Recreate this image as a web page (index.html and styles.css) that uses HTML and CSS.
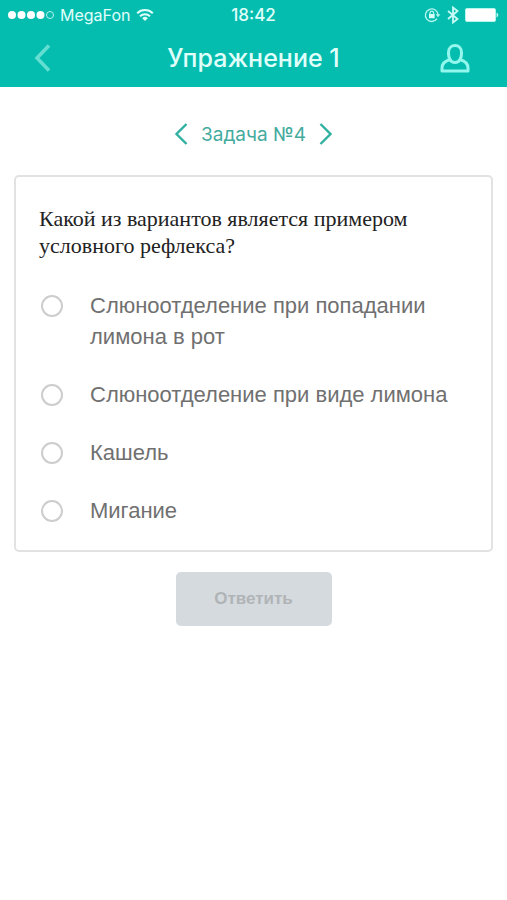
FILE: index.html
```html
<!DOCTYPE html>
<html lang="ru">
<head>
    <meta charset="UTF-8">
    <meta name="viewport" content="width=device-width, initial-scale=1.0">
    <title>Упражнение 1</title>
    <link rel="stylesheet" href="styles.css">
</head>
<body>
    <header class="header">
        <div class="status-bar">
            <div class="status-left">
                <svg class="signal" width="46" height="10" viewBox="0 0 46 10" fill="#fff">
                    <circle cx="4" cy="5" r="4"/>
                    <circle cx="13.5" cy="5" r="4"/>
                    <circle cx="23" cy="5" r="4"/>
                    <circle cx="32.5" cy="5" r="4"/>
                    <circle cx="42" cy="5" r="3.5" fill="none" stroke="#b5f5ee"/>
                </svg>
                <span>MegaFon</span>
                <svg class="wifi" width="18" height="14" viewBox="0 0 18 14" fill="none" stroke="#e0fffb" stroke-width="2">
                    <path d="M1.2 5.2a11.2 11.2 0 0 1 15.6 0"/>
                    <path d="M4 8.2a7.2 7.2 0 0 1 10 0"/>
                    <path d="M9 13L6.2 10.2a4 4 0 0 1 5.6 0z" fill="#e0fffb" stroke="none"/>
                </svg>
            </div>
            <span class="clock">18:42</span>
            <div class="status-right">
                <svg width="17" height="16" viewBox="0 0 17 16" fill="none" stroke="#b5f5ee" stroke-width="1.3">
                    <path d="M13 11.6A6.3 6.3 0 1 1 14 8"/>
                    <path d="M11.6 7.2h4.8L14 10.2z" fill="#b5f5ee" stroke="none"/>
                    <rect x="5" y="7" width="5.6" height="4.2" fill="#d8fffa" stroke="none"/>
                    <path d="M6 7.4V6a1.8 1.8 0 0 1 3.6 0v1.4"/>
                </svg>
                <svg class="bluetooth" width="12" height="18" viewBox="0 0 12 18" fill="none" stroke="#c8fbf5" stroke-width="1.8">
                    <path d="M1 5l9.500 8L6 16.500v-15L10.500 5L1 13"/>
                </svg>
                <svg width="34" height="14" viewBox="0 0 34 14">
                    <rect x="0.5" y="0.5" width="30" height="13" rx="1.5" fill="#fff" stroke="#b5f5ee"/>
                    <path d="M31.5 4.5a2.6 2.6 0 0 1 0 5z" fill="#b5f5ee"/>
                </svg>
            </div>
        </div>
        <nav class="nav-bar">
            <button class="icon-btn" type="button" aria-label="Назад">
                <svg width="20" height="28" viewBox="0 0 20 28" fill="none" stroke="#62ded2" stroke-width="3.6">
                    <path d="M17 1.5L5 14l12 12.5"/>
                </svg>
            </button>
            <h1>Упражнение 1</h1>
            <button class="icon-btn" type="button" aria-label="Профиль">
                <svg width="30" height="30" viewBox="0 0 30 30" fill="none" stroke="#94f7ed" stroke-width="3" stroke-linejoin="round">
                    <path d="M10 16.500C8.500 14.500 8.500 12 8.500 9.500C8.500 5 11.500 2.500 15 2.500s6.500 2.500 6.500 7c0 2.500 0 5-1.500 7c5 1.500 8 4.500 8 8.500v3H2v-3c0-4 3-7 8-8.500z"/>
                    <path d="M10 16.500c2 4 8 4 10 0"/>
                </svg>
            </button>
        </nav>
    </header>

    <main class="content">
        <div class="task-nav">
            <button class="arrow" type="button" aria-label="Предыдущая задача">
                <svg width="14" height="24" viewBox="0 0 14 24" fill="none" stroke="#2fb0a0" stroke-width="2.4">
                    <path d="M12.500 2L2.500 12l10 10"/>
                </svg>
            </button>
            <h2>Задача №4</h2>
            <button class="arrow" type="button" aria-label="Следующая задача">
                <svg width="14" height="24" viewBox="0 0 14 24" fill="none" stroke="#2fb0a0" stroke-width="2.4">
                    <path d="M1.500 2l10 10l-10 10"/>
                </svg>
            </button>
        </div>

        <form class="task-form">
            <fieldset class="card">
                <legend class="question">Какой из вариантов является примером условного рефлекса?</legend>
                <label class="option">
                    <input type="radio" name="answer" value="1">
                    <span>Слюноотделение при попадании лимона в рот</span>
                </label>
                <label class="option">
                    <input type="radio" name="answer" value="2">
                    <span>Слюноотделение при виде лимона</span>
                </label>
                <label class="option">
                    <input type="radio" name="answer" value="3">
                    <span>Кашель</span>
                </label>
                <label class="option">
                    <input type="radio" name="answer" value="4">
                    <span>Мигание</span>
                </label>
            </fieldset>
            <button class="submit-btn" type="submit" disabled>Ответить</button>
        </form>
    </main>
</body>
</html>
```

FILE: styles.css
```css
* {
    box-sizing: border-box;
}
body {
    margin: 0;
    min-height: 100vh;
    background: #fff;
    font-family: "Liberation Sans", Arial, sans-serif;
}
button {
    font-family: inherit;
    border: none;
    background: none;
    padding: 0;
    cursor: pointer;
}
svg {
    display: block;
}
.header {
    background: #04bdaf;
    color: #e0fffb;
}
.status-bar {
    display: grid;
    grid-template-columns: 1fr auto 1fr;
    align-items: center;
    height: 29px;
    padding: 0 8px;
    font-family: Inter, "Liberation Sans", sans-serif;
    font-size: 16px;
}
.status-left,
.status-right {
    display: flex;
    align-items: center;
    gap: 6px;
}
.status-right {
    justify-content: flex-end;
}
.clock {
    font-size: 17px;
    font-weight: 500;
}
.nav-bar {
    display: flex;
    align-items: center;
    justify-content: space-between;
    height: 58px;
    padding: 0 32px;
}
.nav-bar h1 {
    margin: 0;
    font-family: Inter, "Liberation Sans", sans-serif;
    font-size: 25px;
    font-weight: 500;
}
.icon-btn {
    display: flex;
    justify-content: flex-start;
    width: 40px;
}
.icon-btn:last-child {
    justify-content: center;
}
.content {
    padding: 31px 14px;
}
.task-nav {
    display: flex;
    align-items: center;
    justify-content: center;
    gap: 13px;
    height: 32px;
}
.task-nav h2 {
    margin: 0;
    font-family: Inter, "Liberation Sans", sans-serif;
    color: #43ab9e;
    font-size: 19px;
    font-weight: 400;
}
.task-form {
    display: flex;
    flex-direction: column;
    align-items: center;
    gap: 20px;
    margin-top: 25px;
}
.card {
    width: 100%;
    margin: 0;
    padding: 28px 23px 24px;
    border: 2px solid #e2e2e2;
    border-radius: 5px;
}
.question {
    float: left;
    width: 100%;
    margin-bottom: 31px;
    padding: 0;
    color: #222;
    font-family: "Liberation Serif", "Times New Roman", serif;
    font-size: 22px;
    line-height: 27px;
}
.option {
    clear: both;
    display: flex;
    align-items: flex-start;
    gap: 27px;
    color: #707070;
    font-size: 22px;
    line-height: 31px;
    cursor: pointer;
}
.option + .option {
    margin-top: 27px;
}
.option input {
    appearance: none;
    flex: none;
    width: 22px;
    height: 22px;
    margin: 5px 0 0 2px;
    border: 2px solid #cdcdcd;
    border-radius: 50%;
    background: #fff;
}
.option input:checked {
    border-color: #04bdaf;
    background: #04bdaf;
}
.submit-btn {
    width: 156px;
    height: 54px;
    border-radius: 5px;
    background: #d5dade;
    color: #b0b4b7;
    font-size: 17px;
    font-weight: bold;
}
.submit-btn:enabled {
    background: #04bdaf;
    color: #fff;
}
.submit-btn:disabled {
    cursor: default;
}
```
